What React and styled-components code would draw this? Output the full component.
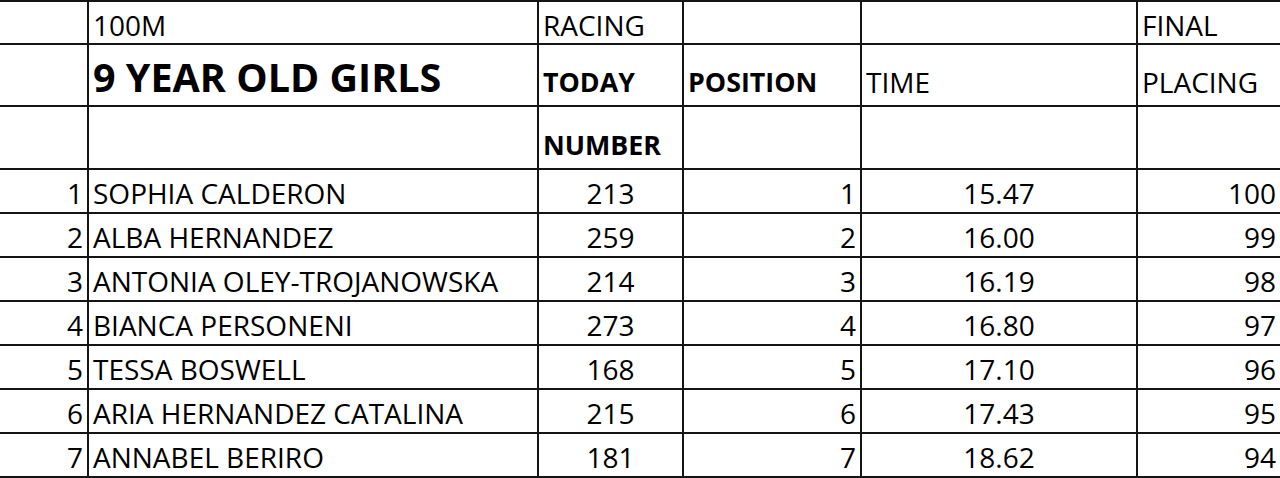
import styled, { createGlobalStyle } from 'styled-components';

const GlobalStyle = createGlobalStyle`
    html, body {
        margin: 0;
        padding: 0;
        background: #fff;
        overflow: hidden;
    }
    body {
        font-family: "Open Sans", "Liberation Sans", sans-serif;
        color: #000;
    }
`;

const results = [
    { no: 1, name: 'SOPHIA CALDERON', bib: 213, pos: 1, time: '15.47', points: 100 },
    { no: 2, name: 'ALBA HERNANDEZ', bib: 259, pos: 2, time: '16.00', points: 99 },
    { no: 3, name: 'ANTONIA OLEY-TROJANOWSKA', bib: 214, pos: 3, time: '16.19', points: 98 },
    { no: 4, name: 'BIANCA PERSONENI', bib: 273, pos: 4, time: '16.80', points: 97 },
    { no: 5, name: 'TESSA BOSWELL', bib: 168, pos: 5, time: '17.10', points: 96 },
    { no: 6, name: 'ARIA HERNANDEZ CATALINA', bib: 215, pos: 6, time: '17.43', points: 95 },
    { no: 7, name: 'ANNABEL BERIRO', bib: 181, pos: 7, time: '18.62', points: 94 },
];

const App = () => {
    return (
        <>
            <GlobalStyle />
            <Sheet>
                <Cell />
                <Cell $pad={4}>100M</Cell>
                <Cell $pad={4}>RACING</Cell>
                <Cell />
                <Cell />
                <Cell $pad={4}>FINAL</Cell>

                <Cell />
                <Title $pad={9}>9 YEAR OLD GIRLS</Title>
                <Cell $pad={9} $bold>TODAY</Cell>
                <Cell $pad={9} $bold>POSITION</Cell>
                <Cell $pad={9}>TIME</Cell>
                <Cell $pad={9}>PLACING</Cell>

                <Cell />
                <Cell />
                <Cell $pad={9} $bold>NUMBER</Cell>
                <Cell />
                <Cell />
                <Cell />

                {results.map((r) => (
                    <Row key={r.no} r={r} />
                ))}
            </Sheet>
        </>
    );
};

const Row = ({ r }) => (
    <>
        <Cell $pad={5} $align="right">{r.no}</Cell>
        <Cell $pad={5}>{r.name}</Cell>
        <Cell $pad={5} $align="center">{r.bib}</Cell>
        <Cell $pad={5} $align="right">{r.pos}</Cell>
        <Cell $pad={5} $align="center">{r.time}</Cell>
        <Cell $pad={5} $align="right">{r.points}</Cell>
    </>
);

export default App;

const Sheet = styled.div`
    display: grid;
    width: 1282px;
    grid-template-columns: 89px 450px 145px 178px 276px 144px;
    grid-template-rows: 43px 62px 63px repeat(7, 44px);
    border-top: 2px solid #151515;
`;

const justify = {
    left: 'flex-start',
    center: 'center',
    right: 'flex-end',
};

const Cell = styled.div`
    box-sizing: border-box;
    display: flex;
    align-items: flex-end;
    justify-content: ${({ $align }) => justify[$align || 'left']};
    padding: 0 4px ${({ $pad }) => $pad || 0}px 4px;
    border-right: 2px solid #151515;
    border-bottom: 2px solid #151515;
    font-size: ${({ $bold }) => ($bold ? 26.8 : 28)}px;
    line-height: 1;
    font-weight: ${({ $bold }) => ($bold ? 700 : 400)};
    white-space: nowrap;
    overflow: hidden;
`;

const Title = styled(Cell)`
    font-size: 39.5px;
    font-weight: 700;
    padding-bottom: ${({ $pad }) => $pad - 1}px;
`;
